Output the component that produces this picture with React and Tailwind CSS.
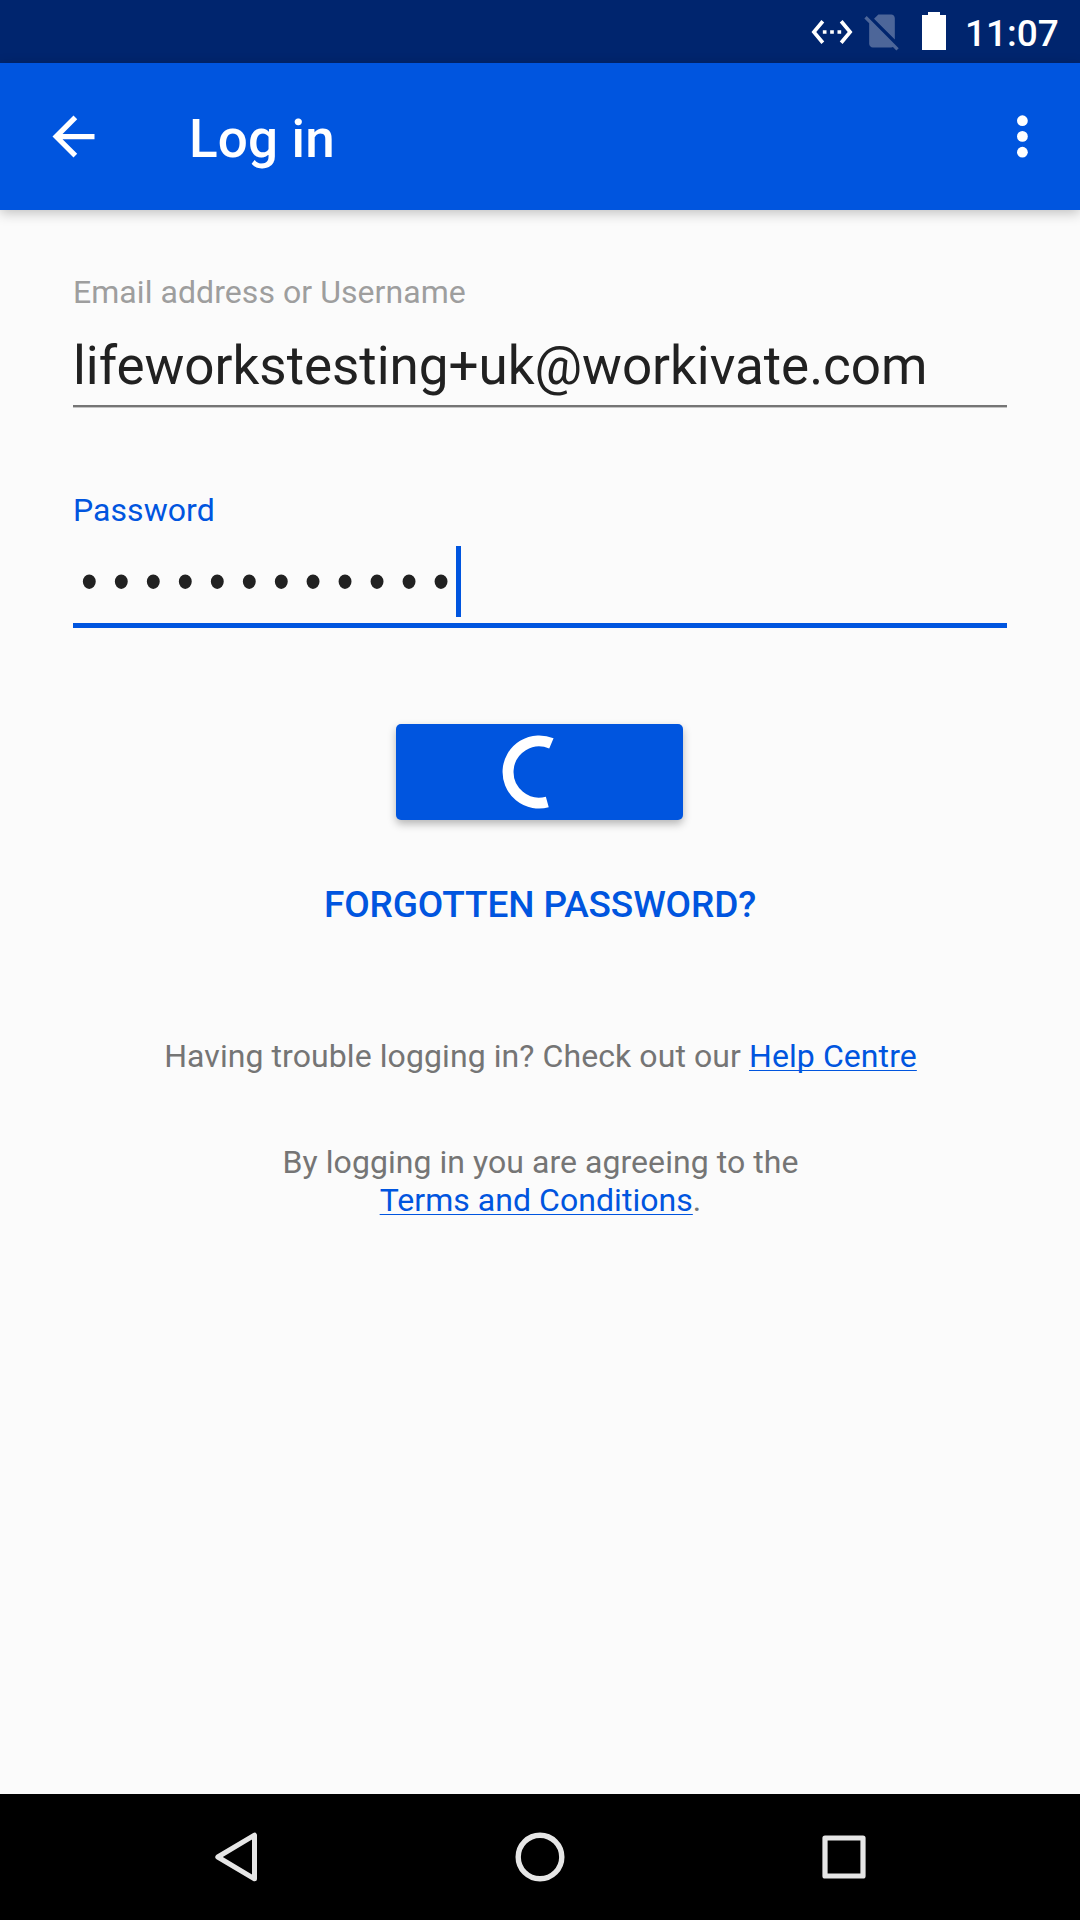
function StatusBar() {
  return (
    <header className="flex h-[63px] shrink-0 bg-[#00256e] pl-[810px] text-white">
      <svg className="mt-[9.6px] h-11 w-11 shrink-0" viewBox="0 0 24 24" fill="currentColor">
        <path d="M7.77 6.76L6.23 5.48.82 12l5.41 6.52 1.54-1.28L3.42 12l4.35-5.24zM7 13h2v-2H7v2zm10-2h-2v2h2v-2zm-6 2h2v-2h-2v2zm6.77-7.52l-1.54 1.28L20.58 12l-4.35 5.24 1.54 1.28L23.18 12l-5.41-6.52z" />
      </svg>
      <svg className="mt-[9.4px] ml-[5.6px] h-11 w-11 shrink-0 text-white/30" viewBox="0 0 24 24" fill="currentColor">
        <path d="M18.99 5c0-1.1-.89-2-1.99-2h-7L7.66 5.34 19 16.68 18.99 5zM3.65 3.88L2.38 5.15 5 7.77V19c0 1.1.9 2 2 2h10.01c.35 0 .67-.1.96-.26l1.88 1.88 1.27-1.27L3.65 3.88z" />
      </svg>
      <svg className="mt-3 ml-[18.4px] h-[38px] w-6 shrink-0" viewBox="0 0 24 38" fill="currentColor">
        <path d="M6 0H18V3H24V38H0V3H6Z" />
      </svg>
      <span className="mt-[12px] ml-[19px] text-[37px] leading-[43px] font-medium whitespace-nowrap">11:07</span>
    </header>
  );
}

function AppBar() {
  return (
    <div className="relative flex h-[147px] shrink-0 items-center bg-[#0055df] pr-[26px] text-white shadow-[0_3px_12px_rgba(0,0,0,0.24)]">
      <svg className="ml-[42px] h-[63px] w-[63px]" viewBox="0 0 24 24" fill="currentColor">
        <path d="M20 11H7.83l5.59-5.59L12 4l-8 8 8 8 1.41-1.41L7.83 13H20v-2z" />
      </svg>
      <h1 className="mt-[4px] ml-[84px] text-[53px] leading-[62px] font-medium tracking-[0.15px]">Log in</h1>
      <svg className="ml-auto h-[63px] w-[63px]" viewBox="0 0 63 63" fill="currentColor">
        <circle cx="31.4" cy="15.7" r="5.4" />
        <circle cx="31.4" cy="31.4" r="5.4" />
        <circle cx="31.4" cy="47.2" r="5.4" />
      </svg>
    </div>
  );
}

function NavBar() {
  return (
    <nav className="flex h-[126px] shrink-0 items-center bg-black text-[#e6e6e6]">
      <svg className="ml-[214px] h-[52px] w-11" viewBox="0 0 44 52" fill="none" stroke="currentColor" strokeWidth="5" strokeLinejoin="round">
        <path d="M40.5 4.2V47.8L3.8 26Z" />
      </svg>
      <svg className="ml-[256px] h-[52px] w-[52px]" viewBox="0 0 52 52" fill="none" stroke="currentColor" strokeWidth="5.4">
        <circle cx="26" cy="26" r="21.8" />
      </svg>
      <svg className="ml-[252px] h-[52px] w-[52px]" viewBox="0 0 52 52" fill="none" stroke="currentColor" strokeWidth="5.2" strokeLinejoin="round">
        <rect x="7" y="7" width="38" height="38" />
      </svg>
    </nav>
  );
}

export default function App() {
  return (
    <div className="flex h-[1920px] w-[1080px] flex-col overflow-hidden bg-[#fbfbfb] font-[Roboto,sans-serif]">
      <StatusBar />
      <AppBar />
      <main className="flex flex-1 flex-col px-[73px]">
        <label className="mt-[64px] text-[32px] leading-[37px] tracking-[0.06px] text-[#9e9e9e]">Email address or Username</label>
        <div className="mt-[24px] h-[72px] border-b-2 border-[#757575] text-[53px] leading-[62px] tracking-[-0.03px] text-[#212121] shadow-[0_1px_0_#c4c4c4]">
          lifeworkstesting+uk@workivate.com
        </div>
        <label className="mt-[85px] text-[32px] leading-[37px] tracking-[0.05px] text-[#0055df]">Password</label>
        <div className="mt-[17px] flex h-[82px] border-b-[5px] border-[#0055df]">
          <div className="h-[71px] w-[383px] pt-[5px] pl-[1.8px]">
            <span className="block w-[440px] origin-left scale-x-[0.9] font-['Liberation_Mono',monospace] text-[53px] leading-[71px] tracking-[3.73px] whitespace-nowrap text-[#212121]">
              ••••••••••••
            </span>
          </div>
          <span className="h-[71px] w-[5px] bg-[#0055df]" />
        </div>
        <button className="mt-[96px] ml-[323px] flex h-[96px] w-[287px] items-center justify-center rounded-[5px] bg-[#0055df] shadow-[0_4px_8px_rgba(0,0,0,0.28)]">
          <svg className="h-[76px] w-[76px]" viewBox="-37.2 -38 76 76" fill="none" stroke="white" strokeWidth="11">
            <path d="M12.2 -28.6A31.1 31.1 0 1 0 8.1 30" />
          </svg>
        </button>
        <a className="mt-[63px] text-center text-[37px] leading-[43px] font-medium tracking-[-0.12px] text-[#0055df]">FORGOTTEN PASSWORD?</a>
        <p className="mt-[112px] pl-px text-center text-[32px] leading-[37px] tracking-[0.08px] whitespace-nowrap text-[#757575]">
          Having trouble logging in? Check out our{" "}
          <a className="text-[#0055df] underline decoration-1 underline-offset-[3px] [text-decoration-skip-ink:none]">Help Centre</a>
        </p>
        <p className="mt-[68px] pl-px text-center text-[32px] leading-[38px] tracking-[0.05px] text-[#757575]">
          By logging in you are agreeing to the
          <br />
          <a className="text-[#0055df] underline decoration-1 underline-offset-[3px] [text-decoration-skip-ink:none]">Terms and Conditions</a>.
        </p>
      </main>
      <NavBar />
    </div>
  );
}
